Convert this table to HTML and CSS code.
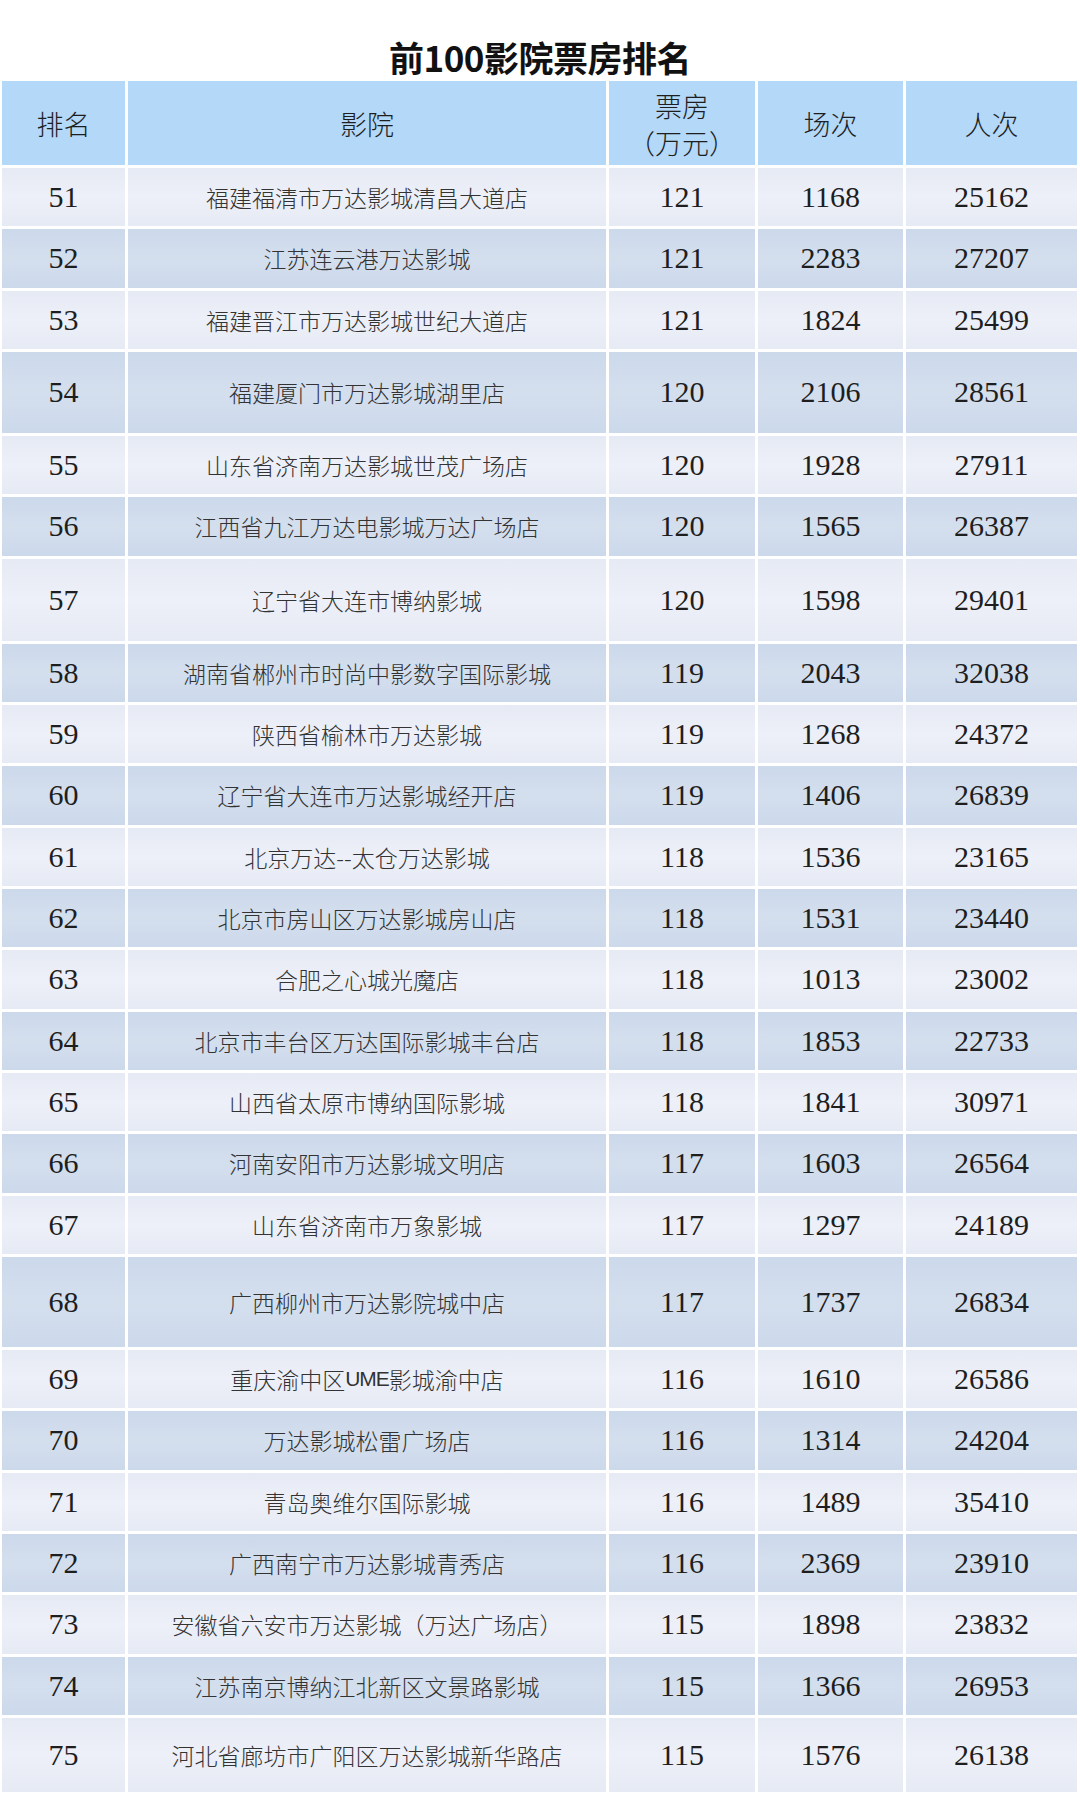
FILE: index.html
```html
<!DOCTYPE html>
<html lang="zh-CN">
<head>
<meta charset="utf-8">
<title>前100影院票房排名</title>
<link rel="stylesheet" href="styles.css">
</head>
<body>
<h1 class="title">前100影院票房排名</h1>
<div class="table">
  <div class="row head">
    <div class="cell">排名</div>
    <div class="cell">影院</div>
    <div class="cell two">票房<br>（万元）</div>
    <div class="cell">场次</div>
    <div class="cell">人次</div>
  </div>
  <div class="row odd"><div class="cell num">51</div><div class="cell name">福建福清市万达影城清昌大道店</div><div class="cell num">121</div><div class="cell num">1168</div><div class="cell num">25162</div></div>
  <div class="row even"><div class="cell num">52</div><div class="cell name">江苏连云港万达影城</div><div class="cell num">121</div><div class="cell num">2283</div><div class="cell num">27207</div></div>
  <div class="row odd"><div class="cell num">53</div><div class="cell name">福建晋江市万达影城世纪大道店</div><div class="cell num">121</div><div class="cell num">1824</div><div class="cell num">25499</div></div>
  <div class="row even h81"><div class="cell num">54</div><div class="cell name">福建厦门市万达影城湖里店</div><div class="cell num">120</div><div class="cell num">2106</div><div class="cell num">28561</div></div>
  <div class="row odd"><div class="cell num">55</div><div class="cell name">山东省济南万达影城世茂广场店</div><div class="cell num">120</div><div class="cell num">1928</div><div class="cell num">27911</div></div>
  <div class="row even"><div class="cell num">56</div><div class="cell name">江西省九江万达电影城万达广场店</div><div class="cell num">120</div><div class="cell num">1565</div><div class="cell num">26387</div></div>
  <div class="row odd h82"><div class="cell num">57</div><div class="cell name">辽宁省大连市博纳影城</div><div class="cell num">120</div><div class="cell num">1598</div><div class="cell num">29401</div></div>
  <div class="row even"><div class="cell num">58</div><div class="cell name">湖南省郴州市时尚中影数字国际影城</div><div class="cell num">119</div><div class="cell num">2043</div><div class="cell num">32038</div></div>
  <div class="row odd"><div class="cell num">59</div><div class="cell name">陕西省榆林市万达影城</div><div class="cell num">119</div><div class="cell num">1268</div><div class="cell num">24372</div></div>
  <div class="row even"><div class="cell num">60</div><div class="cell name">辽宁省大连市万达影城经开店</div><div class="cell num">119</div><div class="cell num">1406</div><div class="cell num">26839</div></div>
  <div class="row odd"><div class="cell num">61</div><div class="cell name">北京万达--太仓万达影城</div><div class="cell num">118</div><div class="cell num">1536</div><div class="cell num">23165</div></div>
  <div class="row even"><div class="cell num">62</div><div class="cell name">北京市房山区万达影城房山店</div><div class="cell num">118</div><div class="cell num">1531</div><div class="cell num">23440</div></div>
  <div class="row odd"><div class="cell num">63</div><div class="cell name">合肥之心城光魔店</div><div class="cell num">118</div><div class="cell num">1013</div><div class="cell num">23002</div></div>
  <div class="row even"><div class="cell num">64</div><div class="cell name">北京市丰台区万达国际影城丰台店</div><div class="cell num">118</div><div class="cell num">1853</div><div class="cell num">22733</div></div>
  <div class="row odd"><div class="cell num">65</div><div class="cell name">山西省太原市博纳国际影城</div><div class="cell num">118</div><div class="cell num">1841</div><div class="cell num">30971</div></div>
  <div class="row even"><div class="cell num">66</div><div class="cell name">河南安阳市万达影城文明店</div><div class="cell num">117</div><div class="cell num">1603</div><div class="cell num">26564</div></div>
  <div class="row odd"><div class="cell num">67</div><div class="cell name">山东省济南市万象影城</div><div class="cell num">117</div><div class="cell num">1297</div><div class="cell num">24189</div></div>
  <div class="row even h90"><div class="cell num">68</div><div class="cell name">广西柳州市万达影院城中店</div><div class="cell num">117</div><div class="cell num">1737</div><div class="cell num">26834</div></div>
  <div class="row odd"><div class="cell num">69</div><div class="cell name">重庆渝中区<span class="latin">UME</span>影城渝中店</div><div class="cell num">116</div><div class="cell num">1610</div><div class="cell num">26586</div></div>
  <div class="row even"><div class="cell num">70</div><div class="cell name">万达影城松雷广场店</div><div class="cell num">116</div><div class="cell num">1314</div><div class="cell num">24204</div></div>
  <div class="row odd"><div class="cell num">71</div><div class="cell name">青岛奥维尔国际影城</div><div class="cell num">116</div><div class="cell num">1489</div><div class="cell num">35410</div></div>
  <div class="row even"><div class="cell num">72</div><div class="cell name">广西南宁市万达影城青秀店</div><div class="cell num">116</div><div class="cell num">2369</div><div class="cell num">23910</div></div>
  <div class="row odd"><div class="cell num">73</div><div class="cell name">安徽省六安市万达影城（万达广场店）</div><div class="cell num">115</div><div class="cell num">1898</div><div class="cell num">23832</div></div>
  <div class="row even"><div class="cell num">74</div><div class="cell name">江苏南京博纳江北新区文景路影城</div><div class="cell num">115</div><div class="cell num">1366</div><div class="cell num">26953</div></div>
  <div class="row odd h74"><div class="cell num">75</div><div class="cell name">河北省廊坊市广阳区万达影城新华路店</div><div class="cell num">115</div><div class="cell num">1576</div><div class="cell num">26138</div></div>
</div>
</body>
</html>
```

FILE: styles.css
```css
html, body {
  margin: 0;
  padding: 0;
  background: #ffffff;
}

body {
  width: 1080px;
  font-family: "Noto Sans CJK SC", "Liberation Serif", sans-serif;
  color: #333333;
}

.title {
  margin: 0 0 3px 0;
  padding-top: 36px;
  height: 42px;
  line-height: 42px;
  text-align: center;
  font-family: "Noto Sans CJK SC", sans-serif;
  font-weight: 700;
  font-size: 35px;
  letter-spacing: -0.5px;
  color: #111111;
}

.table {
  display: flex;
  flex-direction: column;
  gap: 3px;
  margin-left: 2px;
  width: 1075px;
}

.row {
  display: grid;
  grid-template-columns: 123px 478px 146px 145px 171px;
  column-gap: 3px;
  height: 58.33px;
}

.row.head { height: 84px; }
.row.h81 { height: 81px; }
.row.h82 { height: 82px; }
.row.h90 { height: 90px; }
.row.h74 { height: 74px; }

.cell {
  display: flex;
  align-items: center;
  justify-content: center;
  text-align: center;
}

.head .cell {
  background: #b3d8f8;
  font-family: "Noto Sans CJK SC", serif;
  font-size: 27px;
  font-weight: 300;
  color: #1e1e1e;
  line-height: 37px;
}

.head .cell.two {
  padding-top: 2px;
  box-sizing: border-box;
}

.odd .cell {
  background: linear-gradient(180deg, #e6eaf4 0%, #edf0f8 50%, #e6eaf4 100%);
}

.even .cell {
  background: linear-gradient(180deg, #ccd9eb 0%, #d4dfee 50%, #ccd9eb 100%);
}

.num {
  font-family: "Liberation Serif", serif;
  font-size: 30px;
  color: #1e1e1e;
}

.name {
  font-family: "Noto Sans CJK SC", sans-serif;
  font-size: 23px;
  font-weight: 300;
  color: #333333;
  white-space: nowrap;
}

.latin {
  font-family: "Liberation Sans Narrow", "Liberation Sans", sans-serif;
  font-size: 21px;
  letter-spacing: -1px;
}
```
